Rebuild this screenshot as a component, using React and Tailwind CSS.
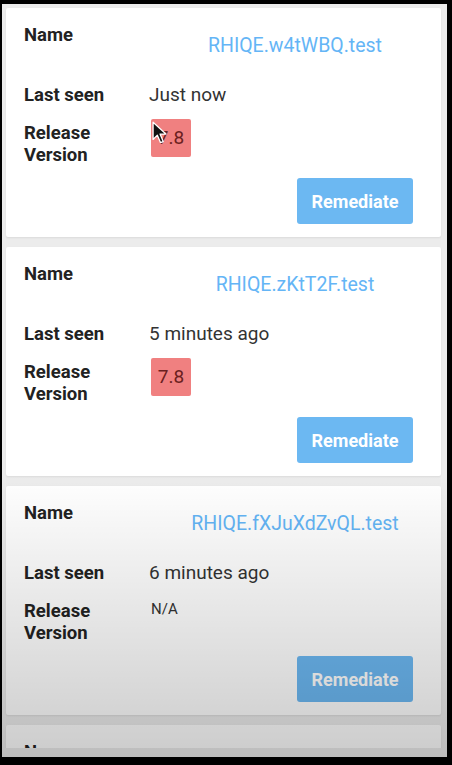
import React from 'react';

const devices = [
    { name: 'RHIQE.w4tWBQ.test', seen: 'Just now', version: '7.8' },
    { name: 'RHIQE.zKtT2F.test', seen: '5 minutes ago', version: '7.8' },
    { name: 'RHIQE.fXJuXdZvQL.test', seen: '6 minutes ago', version: null },
    { name: 'RHIQE.a9Lm2P.test', seen: '7 minutes ago', version: '7.8' },
];

const Cursor = () => (
    <svg className="absolute left-[1px] top-[2px]" width="15" height="24" viewBox="0 0 14 22">
        <path d="M1 1 L1 17 L5 13 L8 20 L10.5 19 L7.5 12 L13 12 Z" fill="#111" stroke="#fff" strokeWidth="1.2" strokeLinejoin="round" />
    </svg>
);

const DeviceCard = ({ device, showCursor }) => {
    return (
        <div className="h-[229px] mb-[10px] bg-white rounded-[2px] shadow-[0_1px_2px_rgba(0,0,0,0.08)] pl-[18px] pt-[17px] shrink-0">
            {/* Name */}
            <div className="flex">
                <div className="w-[125px] text-[18.5px] leading-[20px] font-bold text-[#222]">Name</div>
                <div className="flex-1 text-center pt-[11px] text-[19.5px] leading-[20px] text-[#64b5f6]">
                    {device.name}
                </div>
            </div>

            {/* Last seen */}
            <div className="flex mt-[28px]">
                <div className="w-[125px] text-[18.5px] leading-[22px] font-bold text-[#222]">Last seen</div>
                <div className="flex-1 text-[19px] leading-[22px] text-[#333]">{device.seen}</div>
            </div>

            {/* Release version */}
            <div className="flex mt-[16px] h-[46px]">
                <div className="w-[127px] text-[18.5px] leading-[22px] font-bold text-[#222]">
                    Release<br />Version
                </div>
                <div className="flex-1">
                    {device.version ? (
                        <div className="relative -mt-[3px] w-[40px] h-[38px] bg-[#f08080] rounded-[2px] flex items-center justify-center text-[19px] text-[#6b2020]">
                            {device.version}
                            {showCursor && <Cursor />}
                        </div>
                    ) : (
                        <div className="text-[15px] leading-[18px] text-[#333]">N/A</div>
                    )}
                </div>
            </div>

            {/* Action */}
            <div className="flex justify-end pr-[28px] mt-[10px]">
                <button className="w-[116px] h-[46px] rounded-[3px] bg-[#6cb8f2] text-white text-[18px] font-bold">
                    Remediate
                </button>
            </div>
        </div>
    );
};

export default function App() {
    return (
        <div className="w-[452px] h-[765px] bg-black pt-[4px] pl-[2px]" style={{ fontFamily: 'Roboto, "Noto Sans", sans-serif' }}>
            <div className="relative w-[445px] h-[753px] bg-[#ececec] overflow-hidden">
                <div className="h-[744px] overflow-hidden pt-[4px] pl-[4px] pr-[6px] flex flex-col">
                    {devices.map((d, i) => (
                        <DeviceCard key={d.name} device={d} showCursor={i === 0} />
                    ))}
                </div>
                {/* dim overlay toward bottom */}
                <div className="pointer-events-none absolute left-0 right-0 top-[470px] bottom-0 bg-linear-to-b from-transparent to-black/20" />
            </div>
        </div>
    );
}
